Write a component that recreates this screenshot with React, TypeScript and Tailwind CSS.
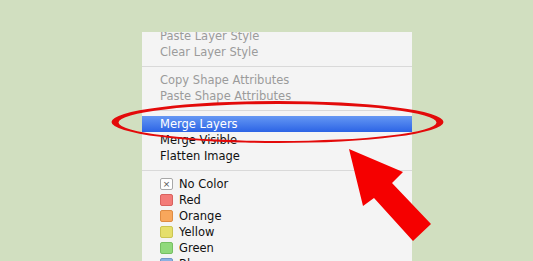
import React from "react";

type Row =
    | { kind: "item"; label: string; dim?: boolean; active?: boolean; swatch?: string }
    | { kind: "sep" };

const rows: Row[] = [
    { kind: "item", label: "Paste Layer Style", dim: true },
    { kind: "item", label: "Clear Layer Style", dim: true },
    { kind: "sep" },
    { kind: "item", label: "Copy Shape Attributes", dim: true },
    { kind: "item", label: "Paste Shape Attributes", dim: true },
    { kind: "sep" },
    { kind: "item", label: "Merge Layers", active: true },
    { kind: "item", label: "Merge Visible" },
    { kind: "item", label: "Flatten Image" },
    { kind: "sep" },
    { kind: "item", label: "No Color", swatch: "none" },
    { kind: "item", label: "Red", swatch: "bg-[#f37b78] border-[#d9625f]" },
    { kind: "item", label: "Orange", swatch: "bg-[#f8a75c] border-[#df8c43]" },
    { kind: "item", label: "Yellow", swatch: "bg-[#e5df6b] border-[#cbc552]" },
    { kind: "item", label: "Green", swatch: "bg-[#90d97c] border-[#76bf63]" },
    { kind: "item", label: "Blue", swatch: "bg-[#8bb1e2] border-[#7097c8]" },
];

const Swatch = ({ swatch }: { swatch: string }) => {
    if (swatch === "none") {
        return (
            <span className="flex items-center justify-center w-[13px] h-[12px] rounded-[2px] border border-[#a8a8a8] bg-white text-[9px] leading-none text-[#555]">
                ×
            </span>
        );
    }
    return <span className={`block w-[13px] h-[12px] rounded-[2px] border ${swatch}`} />;
};

const App = () => {
    return (
        <div className="relative w-[533px] h-[261px] overflow-hidden bg-[#d1dfc0] font-['DejaVu_Sans',sans-serif]">
            <div className="ml-[142px] mt-[32px] w-[270px] h-[229px] overflow-hidden bg-[#f4f4f4]">
                <div className="-mt-[4px] flex flex-col">
                    {rows.map((row, i) =>
                        row.kind === "sep" ? (
                            <div key={i} className="h-[12px] flex items-center">
                                <div className="w-full h-px bg-[#d9d9d9]" />
                            </div>
                        ) : (
                            <div
                                key={i}
                                className={`h-4 flex items-center gap-[6px] pl-[18px] text-[11.5px] leading-none ${
                                    row.active
                                        ? "bg-gradient-to-b from-[#6597f3] to-[#2c63e5] text-white"
                                        : row.dim
                                        ? "text-[#9b9b9b]"
                                        : "text-[#111]"
                                }`}
                            >
                                {row.swatch && <Swatch swatch={row.swatch} />}
                                <span className="pt-[1px]">{row.label}</span>
                            </div>
                        )
                    )}
                </div>
            </div>

            {/* red highlight marks drawn over the menu */}
            <svg className="absolute inset-0 pointer-events-none" width="533" height="261" viewBox="0 0 533 261">
                <path
                    fillRule="evenodd"
                    fill="#e30a0a"
                    d="M111.5 122 a166 21 0 1 0 332 0 a166 21 0 1 0 -332 0 Z M118.5 122.5 a159 18.5 0 1 0 318 0 a159 18.5 0 1 0 -318 0 Z"
                />
                <polygon
                    fill="#f50000"
                    points="349,149 403,172 392,183 431,224 413,241 374,198 363,206"
                />
            </svg>
        </div>
    );
};

export default App;
